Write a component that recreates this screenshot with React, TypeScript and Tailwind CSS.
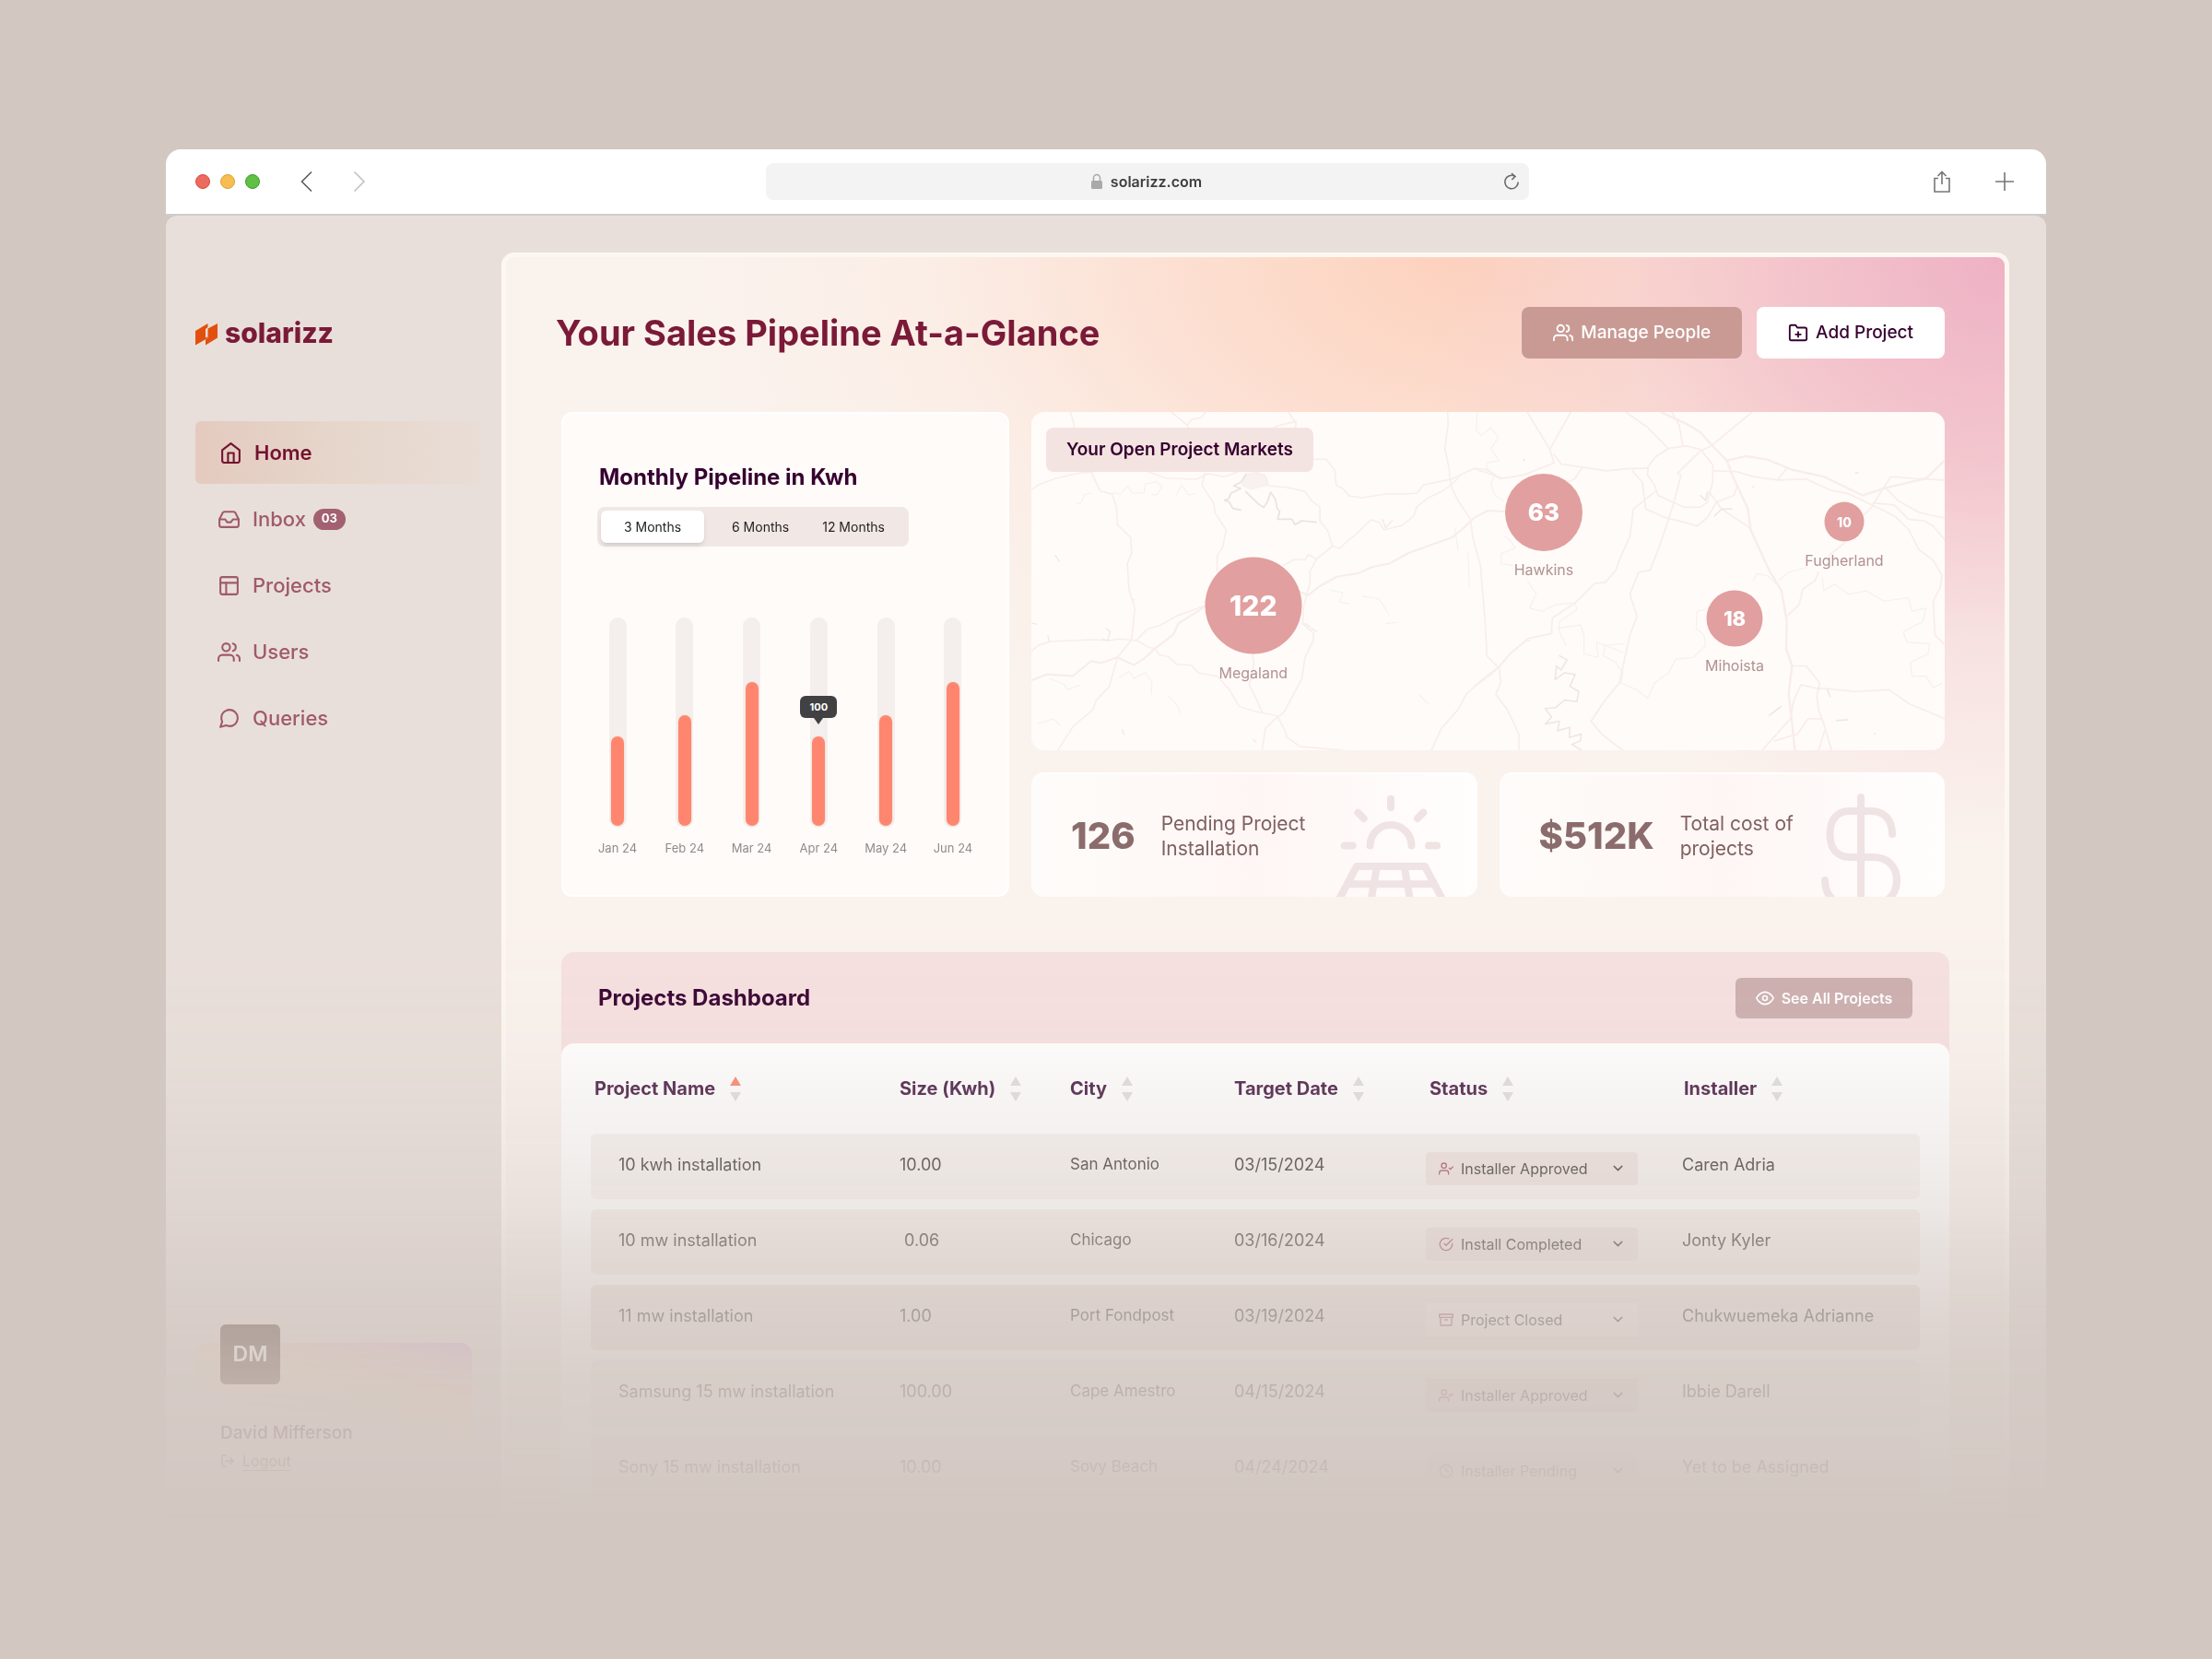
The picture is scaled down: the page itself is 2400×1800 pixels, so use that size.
import { useState } from 'react'
import type { ReactNode } from 'react'
import {
  FiArchive,
  FiCheckCircle,
  FiChevronDown,
  FiClock,
  FiEye,
  FiFolderPlus,
  FiHome,
  FiInbox,
  FiLayout,
  FiLogOut,
  FiMessageCircle,
  FiUserCheck,
  FiUsers
} from 'react-icons/fi'
import type { IconType } from 'react-icons'

interface NavItem {
  label: string
  icon: IconType
  badge?: string
}

interface Market {
  name: string
  count: number
  x: number // percent of the map
  y: number
  bubble: string
}

interface Project {
  name: string
  size: string
  city: string
  date: string
  status: string
  installer: string
  row: string
  pill: string
}

const navItems: NavItem[] = [
  { label: 'Home', icon: FiHome },
  { label: 'Inbox', icon: FiInbox, badge: '03' },
  { label: 'Projects', icon: FiLayout },
  { label: 'Users', icon: FiUsers },
  { label: 'Queries', icon: FiMessageCircle }
]

const ranges = ['3 Months', '6 Months', '12 Months']

const months = [
  { label: 'Jan 24', value: 43 },
  { label: 'Feb 24', value: 53 },
  { label: 'Mar 24', value: 69 },
  { label: 'Apr 24', value: 43, tip: '100' },
  { label: 'May 24', value: 53 },
  { label: 'Jun 24', value: 69 }
]

const markets: Market[] = [
  { name: 'Megaland', count: 122, x: 24.3, y: 57.2, bubble: 'size-[105px] text-[30px]' },
  { name: 'Hawkins', count: 63, x: 56.1, y: 29.7, bubble: 'size-[84px] text-[26px]' },
  { name: 'Mihoista', count: 18, x: 77, y: 60.9, bubble: 'size-[61px] text-[22px]' },
  { name: 'Fugherland', count: 10, x: 89, y: 32.3, bubble: 'size-[43px] text-[14px]' }
]

const projects: Project[] = [
  { name: '10 kwh installation', size: '10.00', city: 'San Antonio', date: '03/15/2024', status: 'Installer Approved', installer: 'Caren Adria', row: 'bg-[#f8f4f1]', pill: 'bg-[#f0e4e2]' },
  { name: '10 mw installation', size: ' 0.06', city: 'Chicago', date: '03/16/2024', status: 'Install Completed', installer: 'Jonty Kyler', row: 'bg-[#f7efec]', pill: 'bg-[#eee3df]' },
  { name: '11 mw installation', size: '1.00', city: 'Port Fondpost', date: '03/19/2024', status: 'Project Closed', installer: 'Chukwuemeka Adrianne', row: 'bg-[#f0e6e1]', pill: 'bg-[#f7eee8]' },
  { name: 'Samsung 15 mw installation', size: '100.00', city: 'Cape Amestro', date: '04/15/2024', status: 'Installer Approved', installer: 'Ibbie Darell', row: 'bg-[#f7f2ef]', pill: 'bg-[#eaddda]' },
  { name: 'Sony 15 mw installation', size: '10.00', city: 'Sovy Beach', date: '04/24/2024', status: 'Installer Pending', installer: 'Yet to be Assigned', row: 'bg-[#f3ece7]', pill: 'bg-[#eaddda]' }
]

const statusIcons: Record<string, IconType> = {
  'Installer Approved': FiUserCheck,
  'Install Completed': FiCheckCircle,
  'Project Closed': FiArchive,
  'Installer Pending': FiClock
}

const columns = [
  { label: 'Project Name', className: 'w-[333px] pl-1' },
  { label: 'Size (Kwh)', className: 'w-[185px] pl-0.5' },
  { label: 'City', className: 'w-[178px] pl-0.5' },
  { label: 'Target Date', className: 'w-[210px] pl-0.5' },
  { label: 'Status', className: 'w-[278px] pl-1' },
  { label: 'Installer', className: 'pl-0.5' }
]

function BrowserBar() {
  return (
    <header className="flex h-[72px] items-center justify-between rounded-t-2xl border-b-2 border-[#cfcccb] bg-white pr-[35px] pl-8">
      <div className="flex items-center">
        <div className="flex gap-[11px]">
          <span className="size-4 rounded-full border border-[#dd4840] bg-[#ed6a5f]" />
          <span className="size-4 rounded-full border border-[#dba035] bg-[#f6bd50]" />
          <span className="size-4 rounded-full border border-[#3d9c2c] bg-[#5fc043]" />
        </div>
        <button aria-label="Back" className="ml-10">
          <svg width="24" height="24" viewBox="0 0 24 24" fill="none" stroke="#5d5d5d" strokeWidth="1.600">
            <path d="M16 1.500 5.500 12 16 22.500" />
          </svg>
        </button>
        <button aria-label="Forward" className="ml-8">
          <svg width="24" height="24" viewBox="0 0 24 24" fill="none" stroke="#c2c2c2" strokeWidth="1.600">
            <path d="M6.500 1.500 17 12 6.500 22.500" />
          </svg>
        </button>
      </div>

      <div className="flex h-10 w-[828px] items-center rounded-lg bg-[#f3f3f3] px-2.5">
        <div className="flex flex-1 items-center justify-center gap-2 pl-4">
          <svg width="14" height="18" viewBox="0 0 14 18" fill="none">
            <rect x="1" y="8" width="12" height="9" rx="1.500" fill="#a9a9a9" />
            <path d="M3.500 8V5a3.500 3.500 0 0 1 7 0v3" stroke="#a9a9a9" strokeWidth="1.500" />
          </svg>
          <input
            aria-label="Address"
            defaultValue="solarizz.com"
            className="field-sizing-content bg-transparent text-base font-semibold text-[#3e3e3e] outline-none"
          />
        </div>
        <button aria-label="Reload">
          <svg width="18" height="20" viewBox="0 0 18 20" fill="none" stroke="#6b6b6b" strokeWidth="1.600">
            <path d="M12.500 4.200A7.200 7.200 0 1 0 16.200 10.500" />
            <path d="M9 1l4 3.500L9.300 8" />
          </svg>
        </button>
      </div>

      <div className="flex items-center gap-12 pl-2.5">
        <button aria-label="Share">
          <svg width="20" height="24" viewBox="0 0 20 24" fill="none" stroke="#777" strokeWidth="1.600">
            <path d="M6 8.500H2V23h16V8.500h-4" />
            <path d="M10 15V2M5.500 6 10 1.500 14.500 6" />
          </svg>
        </button>
        <button aria-label="New tab">
          <svg width="20" height="20" viewBox="0 0 20 20" fill="none" stroke="#777" strokeWidth="1.600">
            <path d="M10 0v20M0 10h20" />
          </svg>
        </button>
      </div>
    </header>
  )
}

function Sidebar() {
  return (
    <aside className="flex w-[364px] shrink-0 flex-col pr-[22px] pl-8">
      <a href="#" className="mt-[104px] flex items-center gap-2">
        <svg width="24" height="24" viewBox="0 0 24 24" className="mt-1">
          <path d="M0 8 13.500 0v4L11 6v9.500L13 14.500v1.500L0 23.500z" fill="#e2500f" />
          <path d="M13.500 5.500 24 0v15.500L11 23.500v-6l2.500-2z" fill="#e2500f" />
        </svg>
        <span className="text-[30px] leading-[46px] font-extrabold text-[#7a1a38]">solarizz</span>
      </a>

      <nav className="mt-[73px] flex flex-col gap-1">
        {navItems.map(({ label, icon: Icon, badge }, i) => (
          <a
            key={label}
            href="#"
            className={
              i === 0
                ? 'flex h-[68px] items-center rounded-md bg-linear-to-r from-[#e4cabf] via-[#e6d6cb] to-[#e9ddd6] pl-[26px] text-[22px] font-semibold text-[#74122f]'
                : 'flex h-[68px] items-center pl-6 text-[22px] font-medium text-[#a05a6c]'
            }
          >
            <Icon size={25} />
            <span className="ml-[13px]">{label}</span>
            {badge && (
              <span className="ml-2 flex h-[23px] w-[35px] items-center justify-center rounded-full bg-[#a26070] text-[13px] font-bold text-white">
                {badge}
              </span>
            )}
          </a>
        ))}
      </nav>

      <div className="mt-auto mr-2.5 mb-12 rounded-t-xl bg-[linear-gradient(12deg,transparent_50%,#eddac4_72%,#e9c6cb_88%,#dcaede)] pb-10 pl-[27px]">
        <div className="-mt-5 flex size-[65px] items-center justify-center rounded-md bg-[#573b2f] text-[23px] font-semibold text-white">
          DM
        </div>
        <p className="mt-[39px] text-[19px] leading-7 font-medium text-[#573b2f]">David Mifferson</p>
        <a href="#" className="mt-1 flex items-center gap-2 text-base text-[#6b4e42]">
          <FiLogOut size={16} />
          <span className="underline underline-offset-4">Logout</span>
        </a>
      </div>
    </aside>
  )
}

function PipelineCard() {
  const [range, setRange] = useState(ranges[0])

  return (
    <section className="rounded-xl border-2 border-white bg-[#fefcfa]/90 px-[37px] pt-[53px] pb-[41px]">
      <h2 className="pl-0.5 text-[24px] leading-8 font-bold text-[#35002f]">Monthly Pipeline in Kwh</h2>
      <div className="mt-4 flex h-[43px] w-[338px] items-center rounded-lg bg-[#f1e8e5] px-1">
        {ranges.map((r) => (
          <button
            key={r}
            onClick={() => setRange(r)}
            className={
              r === range
                ? 'mr-3 h-[35px] w-28 rounded-md bg-white text-sm text-[#222] shadow-md shadow-black/10'
                : 'h-[35px] px-[18px] text-sm text-[#222]'
            }
          >
            {r}
          </button>
        ))}
      </div>

      <div className="mt-[77px] flex justify-between">
        {months.map((m) => (
          <div key={m.label} className="flex w-11 flex-col items-center">
            <div className="flex h-[228px] w-[19px] flex-col items-center justify-end rounded-full bg-[#f4efec] pb-[2px]">
              <div
                className="relative w-[14px] rounded-full bg-[#fe866f] ring-1 ring-[#f6e4de]"
                style={{ height: `${m.value}%` }}
              >
                {m.tip && (
                  <span className="absolute bottom-full left-1/2 mb-5 flex h-6 w-10 -translate-x-1/2 items-center justify-center rounded-md bg-[#414143] text-[11px] font-bold text-white">
                    {m.tip}
                    <svg width="10" height="7" viewBox="0 0 10 7" className="absolute top-full">
                      <path d="M0 0h10L5 7z" fill="#414143" />
                    </svg>
                  </span>
                )}
              </div>
            </div>
            <span className="mt-3 text-[13px] leading-5 whitespace-nowrap text-[#8f8b8a]">{m.label}</span>
          </div>
        ))}
      </div>
    </section>
  )
}

function MapLines() {
  return (
    <svg
      className="absolute inset-0 size-full"
      viewBox="0 0 991 367"
      preserveAspectRatio="xMidYMid slice"
      fill="none"
      strokeLinejoin="round"
      strokeLinecap="round"
      aria-hidden="true"
    >
      {/* west half */}
      <g transform="translate(-19 -27) scale(0.357 0.3333)">
        <path d="M705 280 690 320 720 335 775 320 765 285 735 276z" fill="#f9f1ef" />
        <g stroke="#f8edeb" strokeWidth="4.500">
          <path d="M172 82 180 110 184 132 210 210 235 276 262 338 298 348 312 390 315 448 355 490 358 540 345 575 350 660 368 720 358 822 315 880 290 975 250 1020 240 1050 180 1105 135 1180" />
          <path d="M53 335 75 318 130 296 200 280 240 276" />
          <path d="M410 276 460 296 555 300 590 282 640 292 680 276" />
          <path d="M480 82 527 124 530 132M582 82 570 100 540 105 527 124" />
          <path d="M835 82 858 120 856 130M858 112 800 126 790 132" />
          <path d="M580 280 572 320 608 380 612 410 645 465 635 520 618 550 618 600" />
          <path d="M908 235 950 235 975 270 980 320 1000 330 1020 355 1060 360 1130 348 1190 348 1225 345 1245 318 1330 300 1400 264 1440 268 1475 298 1530 290 1568 280" />
          <path d="M735 276 765 290 775 322 830 326 885 340 905 370 930 390 930 435 955 470 968 518 990 525 1020 495 1040 480 1085 432 1110 440 1125 465 1180 450 1215 420 1225 390 1260 360 1300 340 1330 318 1352 295" />
          <path d="M968 518 920 560 900 600 900 640 890 677 880 720 878 770 910 800 910 825 885 880 875 950 850 1000 820 1060 800 1075 765 1110 755 1180" />
          <path d="M820 580 850 562 885 562 895 545 920 560" />
          <path d="M53 860 75 840 110 828 180 825 240 822 290 825 320 820 375 825 405 845 430 852 440 870 470 878 495 902 540 905 560 930 620 942 655 985 685 1040 730 1055 800 1070 825 1120 830 1140 870 1170 1000 1182" />
          <path d="M375 822 405 788 440 778 495 745 580 712" />
          <path d="M725 870 730 900 715 970 735 1010 755 1060" />
          <path d="M1318 82 1320 120 1310 200 1322 260 1328 320 1350 370 1388 430 1395 490 1418 580 1432 760 1438 875 1475 915 1480 960 1465 1000 1500 1050 1535 1130 1535 1180" />
          <path d="M1270 1180 1300 1110 1350 1050 1375 1000 1430 945 1475 910 1510 865 1555 828 1568 825" />
        </g>
        <g stroke="#f8edeb" strokeWidth="6.500">
          <path d="M580 700 640 665 740 648 860 662 895 677 930 648 980 618 1050 605 1090 585 1140 575 1200 540 1330 490 1360 465 1400 425 1440 402 1490 405" />
          <path d="M53 955 100 935 180 940 235 892 265 898 315 880 365 905 400 880 430 850 485 805 500 770 580 715" />
        </g>
        <g stroke="#f4f0ee" strokeWidth="3">
          <path d="M190 380 205 375 215 350 235 345M300 345 325 348 345 322 360 345 395 345 400 315 435 308 450 325 435 350 420 350M495 350 510 318 530 350 550 348" />
          <path d="M1408 82 1405 140 1420 158 1450 132 1472 165 1450 200 1475 240 1440 245 1435 270 1465 285 1450 310 1460 350 1488 370" />
          <path d="M110 950 150 965 165 985 200 970M320 945 350 925 365 948 400 930 420 960 418 1000M470 1005 500 1040 505 1065M75 1095 120 1080 140 1100" />
          <path d="M960 660 1000 670 990 700 1020 705M1060 680 1110 690 1140 740M1130 770 1165 765M1340 460 1350 530M1380 540 1385 650M1230 1000 1260 1030" />
        </g>
        <g stroke="#ede2e0" strokeWidth="5">
          <path d="M705 285 690 310 668 322 690 330 660 345 652 365 640 368 655 375 665 395 690 400" />
          <path d="M705 340 725 362 745 382 760 392 772 370 780 342 795 365 800 395 808 405 802 430 845 430 855 448 875 435 918 440" />
        </g>
        <g stroke="#efe7e5" strokeWidth="3.500">
          <path d="M280 785 293 795 285 825 270 820M1120 430 1130 458 1150 435M885 770 900 780M905 785 920 795M126 548 138 568M55 768 70 772M103 810 108 830M330 1115 335 1130M728 1148 736 1155M365 690v4" />
        </g>
      </g>

      {/* east half */}
      <g transform="translate(481 -187) scale(0.3827 0.37)">
        <g stroke="#f8edeb" strokeWidth="4.500">
          <path d="M150 507 213 615 225 655M272 507 213 615M225 630 245 658 375 678 430 672 492 670M0 672 80 700 140 690 225 655" />
          <path d="M305 668 285 700 200 745 120 765" />
          <path d="M550 612 600 605 640 615 675 660 675 710 660 770 640 785 595 785 520 750 510 720 490 690 492 665 515 635z" />
          <path d="M430 507 490 550 548 612M560 507 580 545 590 605" />
          <path d="M785 507 670 605 640 620 575 685 585 690 565 770 540 850 520 910 497 970 465 975 440 1040 460 1105 440 1160 425 1230 410 1300 370 1350 330 1412 360 1450 420 1498" />
          <path d="M675 678 740 680 790 695 860 705 940 702 1010 735 1060 745 1130 780 1190 810 1230 850 1260 910 1300 940 1325 985 1320 1020 1300 1060 1305 1160 1330 1185" />
          <path d="M885 670 858 705M1130 775 1180 695 1240 700 1333 705M1165 728 1200 765 1260 800 1333 817M1130 772 1190 778 1230 820 1275 825 1300 840 1333 880" />
          <path d="M447 678 475 710 485 790 540 815 600 830 630 840 660 815 685 770 735 750 745 720" />
          <path d="M512 738 450 790 440 870 410 940 400 970 370 1005 340 1008 285 1065 220 1110 218 1155 150 1170 100 1215 68 1255" />
          <path d="M665 740 700 790 780 845M1130 780 1090 820M1048 890 1005 925M975 975 965 1000 930 1025 920 1070 885 1105" />
          <path d="M900 1250 940 1250 978 1300 970 1340 975 1380 990 1420 1012 1498M978 1315 1080 1325 1175 1320 1230 1360 1333 1405" />
          <path d="M925 1305 905 1350 895 1405 830 1480 815 1498M925 1305 978 1318M985 1405 945 1405 915 1450 850 1470M992 1440 975 1498" />
          <path d="M0 1310 40 1280 68 1255" />
        </g>
        <g stroke="#f8edeb" strokeWidth="6.500">
          <path d="M530 507 600 540 640 565 670 600 715 648 730 690 775 790 782 850 835 970 870 1030 885 1120 883 1200 900 1250 890 1330 900 1420 908 1498" />
          <path d="M715 648 770 635 830 645 900 675 990 695 1100 750 1165 728 1280 700 1330 650" />
        </g>
        <g stroke="#f4f0ee" strokeWidth="3">
          <path d="M790 1000 800 980 830 985 860 1015M863 1000 890 975 940 962M985 990 990 1030 1020 1010 1060 1040 1110 1030 1160 1060 1230 1050 1240 1090 1280 1080 1270 1120 1215 1150 1225 1180 1290 1185 1285 1215 1235 1240 1240 1280 1280 1280 1300 1315 1325 1300" />
          <path d="M655 1190 620 1225 570 1230 550 1270 510 1300 490 1345 460 1320 415 1300 420 1270 400 1240 365 1220 370 1190 425 1185" />
          <path d="M235 1140 300 1130 310 1160 310 1215 350 1225 345 1180 420 1210M85 870 100 880 115 905 75 920 75 950 110 955" />
          <path d="M150 1000 175 1040 155 1080 190 1090 230 1070 285 1065 290 1085 240 1120 240 1150 260 1190M655 1085 630 1090 628 1140 650 1160 655 1190" />
        </g>
        <g stroke="#efe5e3" strokeWidth="4">
          <path d="M240 1220 262 1232 245 1262 232 1250 228 1290 255 1270 285 1275 270 1310 295 1325 290 1355 255 1350 230 1372 200 1375 218 1400 200 1420 240 1412 235 1440 270 1430 268 1460 302 1450 300 1470 275 1480 305 1498" />
          <path d="M640 750 655 765 660 740M680 810 700 790 730 790M835 1395 868 1370M1025 1410 1058 1408M1000 1320 1008 1340M1080 684h6M790 724v3M140 644v3M1134 1447v3" />
        </g>
      </g>
    </svg>
  )
}

function MarketsMap() {
  return (
    <section className="relative h-[367px] overflow-hidden rounded-[14px] bg-[#fffbf8]">
      <MapLines />
      <h2 className="absolute top-[17px] left-4 rounded-lg bg-[#f3e3df]/95 px-[22px] text-[19px] leading-[48px] font-semibold text-[#35002f]">
        Your Open Project Markets
      </h2>
      {markets.map((m) => (
        <div
          key={m.name}
          className="absolute -translate-x-1/2 -translate-y-1/2"
          style={{ left: `${m.x}%`, top: `${m.y}%` }}
        >
          <div className={`flex items-center justify-center rounded-full bg-[#df9a9a]/95 font-extrabold text-white ${m.bubble}`}>
            {m.count}
          </div>
          <span className="absolute top-full left-1/2 mt-2 -translate-x-1/2 text-base text-[#b09292]">{m.name}</span>
        </div>
      ))}
    </section>
  )
}

function SolarIcon() {
  return (
    <svg width="118" height="112" viewBox="0 0 118 112" fill="none" stroke="#efe3e3" strokeWidth="8" strokeLinecap="round" strokeLinejoin="round">
      <path d="M59 6v9M23.300 20.700l6.400 6.300M94.300 20.700 88 27M8.700 56.500h9M100 56.500h9" />
      <path d="M36.500 56.500A22.500 22.500 0 0 1 81.500 56.500" />
      <path d="M-2 124 22 79h74l24 45M14 98.300h90M44 79l-8 45M73.500 79l8 45" />
    </svg>
  )
}

function DollarIcon() {
  return (
    <svg width="100" height="112" viewBox="-8 0 100 112" fill="none" stroke="#efe3e3" strokeWidth="8" strokeLinecap="round">
      <path d="M45 4v126" />
      <path d="M79 44C79 28 70 19 56 19H33C19 19 11.500 28 11.500 44S19 69 33 69H58C74 69 84 79 84 94S74 120 58 120H30C16 120 6 110 6 94" />
    </svg>
  )
}

function StatCard({ value, children, icon }: { value: string; children: ReactNode; icon: ReactNode }) {
  return (
    <section className="relative flex h-full items-center overflow-hidden rounded-[14px] border-t-2 border-white bg-linear-to-r from-[#fefcfa] via-[#fef6f4] to-[#fffefd] pl-[43px] text-[#8b6c6c]">
      <p className="text-[40px] font-extrabold">{value}</p>
      <p className="ml-7 text-[21px] leading-[27px] text-[#7f6161]">{children}</p>
      <div className="absolute right-[35px] bottom-0 flex w-[118px] justify-center">{icon}</div>
    </section>
  )
}

function SortArrows({ active }: { active: boolean }) {
  return (
    <svg width="12" height="27" viewBox="0 0 12 27" aria-hidden="true">
      <path d="M6 0l6 10H0z" fill={active ? '#fe866f' : '#dfdedd'} />
      <path d="M6 27l6-10H0z" fill="#dfdedd" />
    </svg>
  )
}

function StatusSelect({ project }: { project: Project }) {
  const Icon = statusIcons[project.status]

  return (
    <div className={`relative flex h-9 w-[230px] items-center rounded ${project.pill}`}>
      <Icon size={16} className="absolute left-[14px] text-[#a8566c]" />
      <select
        aria-label={`Status of ${project.name}`}
        defaultValue={project.status}
        className="h-full w-full appearance-none bg-transparent pr-9 pl-[38px] text-base text-[#3c3836] outline-none"
      >
        {Object.keys(statusIcons).map((s) => (
          <option key={s}>{s}</option>
        ))}
      </select>
      <FiChevronDown size={17} className="pointer-events-none absolute right-[13px]" />
    </div>
  )
}

function ProjectsDashboard() {
  return (
    <section className="rounded-[14px] bg-[#f6e0e0]">
      <div className="flex h-[99px] items-center justify-between pr-10 pl-10">
        <h2 className="text-[24px] font-bold text-[#35002f]">Projects Dashboard</h2>
        <button className="flex h-11 w-48 items-center justify-center gap-2 rounded-md bg-[#ccaeae] text-base font-semibold text-white">
          <FiEye size={20} />
          See All Projects
        </button>
      </div>
      <div className="rounded-[14px] bg-white px-8">
        <table className="w-full table-fixed border-separate border-spacing-x-0 border-spacing-y-[11px] text-left text-[#3c3836]">
          <thead>
            <tr className="h-[76px]">
              {columns.map((c, i) => (
                <th key={c.label} className={c.className}>
                  <button className="flex items-center gap-4 text-[20px] font-bold text-[#491c45]">
                    {c.label}
                    <SortArrows active={i === 0} />
                  </button>
                </th>
              ))}
            </tr>
          </thead>
          <tbody>
            {projects.map((p) => (
              <tr key={p.name} className={`h-[71px] text-[18px] ${p.row}`}>
                <td className="rounded-l-md pb-1 pl-[30px]">{p.name}</td>
                <td className="pb-1 pl-0.5 whitespace-pre">{p.size}</td>
                <td className="pb-1 pl-0.5 text-[17px]">{p.city}</td>
                <td className="pb-1 pl-0.5">{p.date}</td>
                <td className="pt-1">
                  <StatusSelect project={p} />
                </td>
                <td className="rounded-r-md pb-1">{p.installer}</td>
              </tr>
            ))}
          </tbody>
        </table>
      </div>
    </section>
  )
}

export default function App() {
  return (
    <div className="min-h-screen bg-[#d2c7c1] px-[180px] pt-[162px] font-['Inter',sans-serif]">
      <div className="[mask-image:linear-gradient(to_bottom,#000_838px,rgba(0,0,0,.9)_978px,rgba(0,0,0,.76)_1058px,rgba(0,0,0,.6)_1148px,rgba(0,0,0,.47)_1186px,rgba(0,0,0,.27)_1268px,rgba(0,0,0,.16)_1338px,rgba(0,0,0,.1)_1410px,transparent_1496px)]">
        <BrowserBar />
        <div className="flex rounded-t-xl bg-[#e9dfda]">
          <Sidebar />
          <main className="mt-10 mr-10 flex-1 rounded-[14px] border-[5px] border-[#fdf7f1] bg-[#faf2ed] bg-[radial-gradient(ellipse_640px_640px_at_100%_0%,#eeb1c4_0%,rgba(241,188,200,.8)_35%,rgba(244,205,212,.45)_65%,transparent),radial-gradient(ellipse_840px_560px_at_64%_0%,#fdd1bc_0%,rgba(253,216,199,.7)_38%,rgba(253,228,215,.3)_70%,transparent)] pb-10">
            <div className="flex items-center justify-between pt-[54px] pr-[65px] pl-[54px]">
              <h1 className="text-[38px] leading-[56px] font-bold text-[#7a1a38]">Your Sales Pipeline At-a-Glance</h1>
              <div className="flex gap-4">
                <button className="flex h-14 items-center gap-2 rounded-lg bg-[#c99a94] px-[34px] text-[19px] font-medium text-white">
                  <FiUsers size={22} />
                  Manage People
                </button>
                <button className="flex h-14 items-center gap-2 rounded-lg bg-white px-[34px] text-[19px] font-medium text-[#35002f]">
                  <FiFolderPlus size={22} />
                  Add Project
                </button>
              </div>
            </div>

            <div className="mt-[58px] grid grid-cols-[486px_1fr] gap-6 pr-[65px] pl-[60px]">
              <PipelineCard />
              <div className="flex flex-col gap-6">
                <MarketsMap />
                <div className="grid flex-1 grid-cols-2 gap-6">
                  <StatCard value="126" icon={<SolarIcon />}>
                    Pending Project
                    <br />
                    Installation
                  </StatCard>
                  <StatCard value="$512K" icon={<DollarIcon />}>
                    Total cost of
                    <br />
                    projects
                  </StatCard>
                </div>
              </div>
            </div>

            <div className="mt-[60px] px-[60px]">
              <ProjectsDashboard />
            </div>
          </main>
        </div>
      </div>
    </div>
  )
}
